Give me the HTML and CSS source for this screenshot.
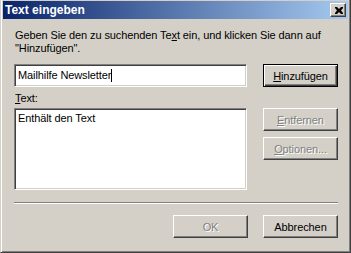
FILE: index.html
```html
<!DOCTYPE html>
<html lang="de">
<head>
    <meta charset="UTF-8">
    <title>Text eingeben</title>
    <link rel="stylesheet" href="styles.css">
</head>
<body>
    <div class="window">
        <div class="titlebar">
            <span class="title">Text eingeben</span>
            <button class="close" aria-label="Schließen">
                <svg width="8" height="7" viewBox="0 0 8 7">
                    <path d="M0 0h2l2 2 2-2h2v1L6 3.5 8 6v1H6L4 5 2 7H0V6l2-2.5L0 1z" fill="#000"/>
                </svg>
            </button>
        </div>

        <div class="content">
            <p class="intro">Geben Sie den zu suchenden Te<u>x</u>t ein, und klicken Sie dann auf<br>"Hinzufügen".</p>

            <div class="row">
                <div class="edit">Mailhilfe Newsletter<span class="caret"></span></div>
                <button class="btn default"><u>H</u>inzufügen</button>
            </div>

            <div class="label"><u>T</u>ext:</div>

            <div class="row">
                <div class="listbox">
                    <div class="item">Enthält den Text</div>
                </div>
                <div class="side">
                    <button class="btn" disabled><u>E</u>ntfernen</button>
                    <button class="btn" disabled><u>O</u>ptionen...</button>
                </div>
            </div>

            <div class="separator"></div>

            <div class="actions">
                <button class="btn" disabled>OK</button>
                <button class="btn">Abbrechen</button>
            </div>
        </div>
    </div>
</body>
</html>
```

FILE: styles.css
```css
* {
    margin: 0;
    padding: 0;
    box-sizing: border-box;
}

body {
    background: #d4d0c8;
    font-family: 'Liberation Sans', Arial, sans-serif;
    font-size: 11px;
    line-height: 13px;
    letter-spacing: -0.1px;
    color: #000;
}

u {
    text-decoration: underline;
    text-underline-offset: 1px;
}

.window {
    width: 351px;
    height: 253px;
    background: #d4d0c8;
    border-left: 1px solid #d4d0c8;
    border-right: 1px solid #404040;
    border-bottom: 1px solid #404040;
    box-shadow: inset 1px 0 #fff, inset -1px -1px #808080;
    padding: 1px 2px 2px 2px;
}

.titlebar {
    height: 18px;
    display: flex;
    align-items: center;
    justify-content: space-between;
    padding-left: 2px;
    padding-right: 2px;
    background: linear-gradient(90deg, #0a246a, #a6caf0);
}

.title {
    color: #fff;
    font-weight: bold;
    font-size: 12px;
    letter-spacing: 0;
}

.close {
    width: 16px;
    height: 14px;
    background: #d4d0c8;
    border: 1px solid;
    border-color: #fff #404040 #404040 #fff;
    box-shadow: inset -1px -1px #808080;
    display: flex;
    align-items: center;
    justify-content: center;
    padding-left: 1px;
}

.content {
    padding: 10px 10px 0 11px;
}

.intro {
    padding-left: 1px;
    height: 26px;
}

.row {
    display: grid;
    grid-template-columns: 233px 75px;
    column-gap: 16px;
    margin-top: 9px;
}

.edit,
.listbox {
    background: #fff;
    border: 1px solid;
    border-color: #808080 #fff #fff #808080;
    box-shadow: inset 1px 1px #404040, inset -1px -1px #d4d0c8;
}

.edit {
    height: 23px;
    padding: 4px 3px;
    display: flex;
    align-items: center;
}

.caret {
    display: inline-block;
    width: 1px;
    height: 13px;
    background: #000;
}

.label {
    margin-top: 5px;
    padding-left: 1px;
}

.label + .row {
    margin-top: 3px;
}

.listbox {
    height: 82px;
    padding: 3px 3px;
}

.side {
    display: flex;
    flex-direction: column;
    gap: 6px;
}

.btn {
    width: 75px;
    height: 23px;
    font-family: inherit;
    font-size: 11px;
    letter-spacing: -0.1px;
    color: #000;
    background: #d4d0c8;
    border: 1px solid;
    border-color: #fff #404040 #404040 #fff;
    box-shadow: inset -1px -1px #808080;
}

.btn.default {
    border: 1px solid #000;
    box-shadow: inset 1px 1px #fff, inset -1px -1px #404040, inset -2px -2px #808080;
}

.btn:disabled {
    color: #808080;
    text-shadow: 1px 1px #fff;
}

.separator {
    margin-top: 12px;
    height: 2px;
    border-top: 1px solid #808080;
    border-bottom: 1px solid #fff;
}

.actions {
    display: flex;
    justify-content: flex-end;
    gap: 15px;
    margin-top: 11px;
}
```
